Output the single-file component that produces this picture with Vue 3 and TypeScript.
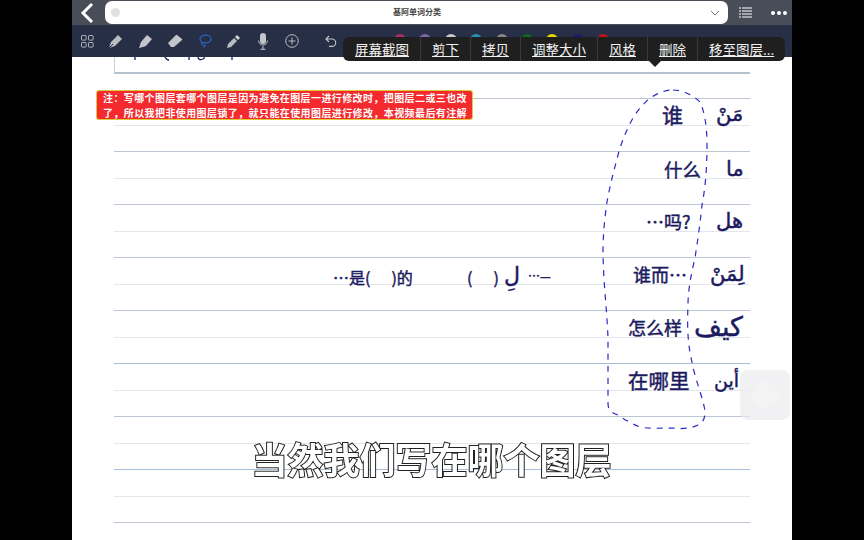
<script setup lang="ts">
const lines = ['b','l','b','l','b','l','b','l','b','l','u','l','b','l','u','l','b'].map((k, i) => ({ k, i }))
const swatches = ['#b3295f','#7a6aa8','#c9c9c9','#2a8fb0','#8a8585','#0f6b1c','#e8d800','#201a6e','#c4101a']
const words = ['屏幕截图','剪下','拷贝','调整大小','风格','删除','移至图层...']
const rows = [
  { zh: '谁', ar: 'مَنْ', y: 102, zx: 662, ax: 716, s: 21, as: 21 },
  { zh: '什么', ar: 'ما', y: 157, zx: 664, ax: 726, s: 18.500, as: 21 },
  { zh: '…吗?', ar: 'هل', y: 209, zx: 646, ax: 716, s: 18, as: 21 },
  { zh: '谁而…', ar: 'لِمَنْ', y: 262, zx: 633, ax: 710, s: 18, as: 21 },
  { zh: '怎么样', ar: 'كيف', y: 315, zx: 628, ax: 694, s: 18, as: 27 },
  { zh: '在哪里', ar: 'أين', y: 368, zx: 628, ax: 714, s: 20.500, as: 19 },
]
</script>

<template>
  <div class="stage">
    <div class="screen">
      <header class="titlebar">
        <svg class="back" width="14" height="20" viewBox="0 0 14 20"><path d="M12 1 3 10l9 9" fill="none" stroke="#fff" stroke-width="3"/></svg>
        <div class="address">
          <span class="clear"></span>
          <span class="title">基阿单词分类</span>
          <svg width="10" height="6" viewBox="0 0 10 6"><path d="M1 1l4 4 4-4" fill="none" stroke="#777" stroke-width="1"/></svg>
        </div>
        <svg class="listicon" width="13" height="11" viewBox="0 0 13 11"><path d="M0 1h2M3 1h10M0 4h2M3 4h10M0 7h2M3 7h10M0 10h2M3 10h10" stroke="#fff" stroke-width="1.200"/></svg>
        <div class="dots"><i></i><i></i><i></i></div>
      </header>

      <nav class="toolbar">
        <svg width="13" height="13" viewBox="0 0 13 13" fill="none" stroke="#aeb3bd"><rect x=".5" y=".5" width="4.600" height="4.600" rx=".6"/><rect x="7.500" y=".5" width="4.600" height="4.600" rx=".6"/><rect x=".5" y="7.500" width="4.600" height="4.600" rx=".6"/><rect x="7.500" y="7.500" width="4.600" height="4.600" rx=".6"/></svg>
        <svg class="t1" width="16" height="16" viewBox="0 0 16 16"><path d="M1 15l2-6 7-7 4 4-7 7z" fill="#b9bcc2"/><path d="M1 15l4-4" stroke="#262f45"/></svg>
        <svg class="t2" width="16" height="16" viewBox="0 0 16 16"><path d="M1 15l1-3 1-3 6-7 5 4-6 7-3 1z" fill="#c3c5ca"/></svg>
        <svg class="t3" width="15" height="14" viewBox="0 0 15 14"><path d="M0 9 8 1a1 1 0 0 1 1 0l5 4a1 1 0 0 1 0 1L6 13H3z" fill="#c3c5ca"/></svg>
        <svg class="t4" width="14" height="14" viewBox="0 0 14 14" fill="none" stroke="#2b62c8" stroke-width="1.200"><ellipse cx="7.500" cy="5" rx="5.500" ry="3.800"/><path d="M4 8c-1 2 0 3 2 3s1 2-1 2"/></svg>
        <svg class="t5" width="15" height="15" viewBox="0 0 15 15"><path d="M1 14l1-4 6-6 3 3-6 6z" fill="#b9bcc2"/><path d="M9 3l2-2 3 3-2 2z" fill="#d5d6da"/></svg>
        <svg class="t6" width="10" height="17" viewBox="0 0 10 17"><rect x="2" y="0" width="6" height="11" rx="3" fill="#c3c5ca"/><path d="M.6 7.500c0 6 8.800 6 8.800 0M5 13v3M2.500 16.300h5" fill="none" stroke="#c3c5ca"/></svg>
        <svg class="t7" width="14" height="14" viewBox="0 0 14 14" fill="none" stroke="#b9bcc2"><circle cx="7" cy="7" r="6.300"/><path d="M3.500 7h7M7 3.500v7"/></svg>
        <svg class="t8" width="12" height="12" viewBox="0 0 12 12" fill="none" stroke="#c3c5ca" stroke-width="1.100"><path d="M4 1 1 4l3 3M1 4h6a3.700 3.700 0 0 1 0 7.400H4"/></svg>
        <div class="swatches"><i v-for="c in swatches" :key="c" :style="{ background: c }"></i></div>
      </nav>

      <main class="page">
        <div class="topbox"></div>
        <div class="ruled">
          <div v-for="l in lines" :key="l.i" class="rule" :class="l.k"></div>
        </div>

        <svg class="scraps" width="120" height="5" viewBox="0 0 120 5" fill="none" stroke="#1c1a5e" stroke-width="1.300"><path d="M3 0v3M33 0c1 2 2 3 4 3M57 0v3M66 0c0 3 3 3 5 2 2-1 1-2 1-2M100 0v3"/></svg>

        <div class="note">
          <p>注：写哪个图层套哪个图层是因为避免在图层一进行修改时，把图层二或三也改</p>
          <p>了，所以我把非使用图层锁了，就只能在使用图层进行修改，本视频最后有注解</p>
        </div>

        <template v-for="r in rows" :key="r.zh">
          <span class="ink" :style="{ left: r.zx - 72 + 'px', top: r.y - 57 + 'px', fontSize: r.s + 'px' }">{{ r.zh }}</span>
          <span class="ink arabic" dir="rtl" :style="{ left: r.ax - 72 + 'px', top: r.y - 57 + 'px', fontSize: r.as + 'px' }">{{ r.ar }}</span>
        </template>

        <span class="ink sentence s1">…是(<b class="gap"></b>)的</span>
        <span class="ink sentence s2">(<b class="gap"></b>)</span>
        <span class="ink arabic s3">لِ</span>
        <span class="ink sentence s4">…—</span>

        <svg class="lasso" width="110" height="346" viewBox="0 0 110 346">
          <path d="M73 5C84 5 94 11 100 17C104 25 107 40 107 60C107 90 104 110 102 120C100 140 97 160 95 173C91 190 88 205 88 220C87 245 88 260 92 277C95 295 104 315 105 327C105 335 102 338 98 340C90 344 80 344 73 343C60 343 50 344 40 342C30 338 24 334 18 330C12 328 8 326 8 318C8 290 8 270 8 253C7 225 3 195 3 165C3 150 5 130 7 117C10 100 14 85 18 70C22 55 28 42 33 33C38 25 44 18 50 13C58 8 65 5 73 5Z" fill="none" stroke="#2a2ac8" stroke-width="1.200" stroke-dasharray="6 6"/>
        </svg>

        <div class="float"><span></span></div>

        <div class="menu">
          <span v-for="w in words" :key="w" class="item"><u>{{ w }}</u></span>
          <i class="caret"></i>
        </div>

        <div class="caption">当然我们写在哪个图层</div>
      </main>
    </div>
  </div>
</template>

<style>
html, body { margin: 0; background: #000; overflow: hidden; }
</style>

<style scoped>
.stage { width: 864px; height: 540px; background: #000; display: flex; justify-content: center; font-family: "Noto Sans CJK SC", "Liberation Sans", sans-serif; }
.screen { width: 720px; height: 540px; display: flex; flex-direction: column; background: #fff; overflow: hidden; }
.titlebar { height: 25px; flex: none; background: #484d58; display: flex; align-items: center; }
.back { margin-left: 8px; flex: none; }
.address { margin-left: 11px; width: 623px; height: 23px; background: #fff; border-radius: 7px; display: flex; align-items: center; justify-content: space-between; padding: 0 8px 0 6px; box-sizing: border-box; position: relative; }
.clear { width: 9px; height: 9px; border-radius: 50%; background: #e0e0e0; }
.title { position: absolute; left: 288px; top: 5px; font-size: 8px; line-height: 12px; color: #444; font-weight: 700; }
.listicon { margin-left: 11px; }
.dots { margin-left: 19px; display: flex; gap: 2px; }
.dots i { width: 4px; height: 4px; border-radius: 50%; background: #fff; }
.toolbar { height: 32px; flex: none; background: #262f45; display: flex; align-items: center; padding-left: 9px; box-sizing: border-box; }
.t1 { margin-left: 14px; } .t2 { margin-left: 14px; } .t3 { margin-left: 14px; } .t4 { margin-left: 15px; }
.t5 { margin-left: 14px; } .t6 { margin-left: 17px; } .t7 { margin-left: 17px; } .t8 { margin-left: 26px; }
.swatches { margin-left: 57px; display: flex; gap: 13.400px; align-self: flex-start; padding-top: 9px; }
.swatches i { width: 12px; height: 12px; border-radius: 50%; }
.page { flex: 1; position: relative; background: #fff; }
.topbox { width: 636px; height: 17px; margin-left: 42px; box-sizing: border-box; border-left: 1px solid #c8d0de; border-bottom: 2px solid #b6c0cf; }
.ruled { margin: 24px 0 0 42px; width: 636px; }
.rule { height: 26.500px; box-sizing: border-box; border-top: 1px solid #e3e7ec; }
.rule.b { border-top: 1.500px solid #bcc5d2; }
.rule.u { border-top: 1px solid #a7bfdc; }
.scraps { position: absolute; left: 60px; top: 0; }
.note { position: absolute; left: 24px; top: 33px; width: 377px; height: 30px; box-sizing: border-box; background: #f52a2e; border: 1px solid #dccb35; border-radius: 3px; color: #fff; font-size: 10px; line-height: 14.500px; font-weight: 700; padding: 0 0 0 6px; white-space: nowrap; }
.note p { margin: 0; letter-spacing: .4px; }
.ink { position: absolute; color: #1c1a5e; font-size: 17px; line-height: 24px; white-space: nowrap; font-weight: 400; -webkit-text-stroke: .45px #1c1a5e; font-family: "Noto Sans CJK SC", sans-serif; }
.arabic { font-family: "DejaVu Sans", sans-serif; font-size: 20px; }
.sentence { font-size: 16px; }
.gap { display: inline-block; width: 21px; }
.s1 { left: 261px; top: 208px; }
.s2 { left: 395px; top: 208px; }
.s3 { left: 432px; top: 207px; font-size: 22px; }
.s4 { left: 456px; top: 207px; font-size: 12px; }
.lasso { position: absolute; left: 528px; top: 28px; }
.float { position: absolute; left: 668px; top: 313px; width: 50px; height: 50px; border-radius: 8px; background: rgba(235,235,238,.7); display: flex; align-items: center; justify-content: center; }
.float span { width: 26px; height: 26px; border-radius: 50%; background: #f3f3f4; }
.menu { position: absolute; left: 271px; top: -20px; height: 24px; background: #1f1f1f; border-radius: 6px; display: flex; }
.item { padding: 0 11px; display: flex; align-items: center; justify-content: center; border-left: 1px solid #3a3a3a; color: #f2f2f2; font-size: 13.500px; line-height: 18px; white-space: nowrap; }
.item:first-child { border-left: 0; padding-left: 12px; }
.caret { position: absolute; left: 306px; top: 24px; width: 0; height: 0; border: 6px solid transparent; border-top-color: #1f1f1f; border-bottom: 0; }
.caption { position: absolute; left: 0; right: 0; top: 376px; margin-left: -1px; text-align: center; font-size: 36px; line-height: 50px; font-weight: 700; color: #fff; -webkit-text-stroke: 2px #222; paint-order: stroke fill; will-change: transform; }
</style>
